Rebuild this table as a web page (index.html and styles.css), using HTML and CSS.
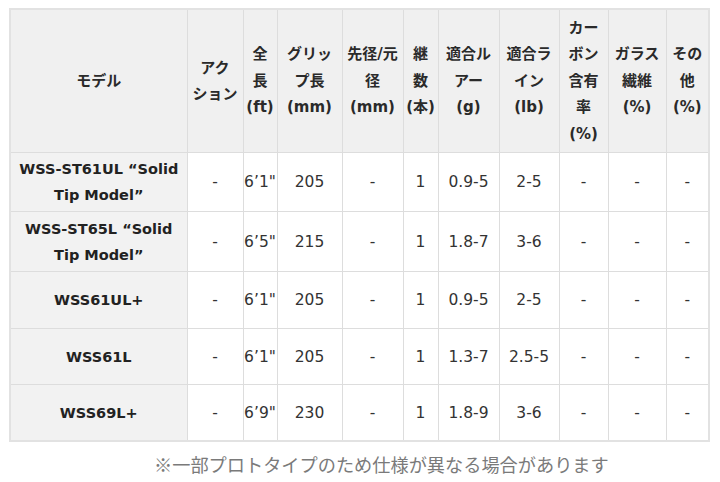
FILE: index.html
```html
<!DOCTYPE html>
<html lang="ja">
<head>
<meta charset="utf-8">
<link rel="stylesheet" href="styles.css">
</head>
<body>
<div class="page">
<table class="spec">
<colgroup>
<col class="c-model"><col class="c-act"><col class="c-len"><col class="c-grip"><col class="c-dia"><col class="c-sec"><col class="c-lure"><col class="c-line"><col class="c-carbon"><col class="c-glass"><col class="c-other">
</colgroup>
<thead>
<tr>
<th>モデル</th>
<th>アク<br>ション</th>
<th>全<br>長<br>(ft)</th>
<th>グリッ<br>プ長<br>(mm)</th>
<th>先径/元<br>径<br>(mm)</th>
<th>継<br>数<br>(本)</th>
<th>適合ル<br>アー<br>(g)</th>
<th>適合ラ<br>イン<br>(lb)</th>
<th>カー<br>ボン<br>含有<br>率<br>(%)</th>
<th>ガラス<br>繊維<br>(%)</th>
<th>その<br>他<br>(%)</th>
</tr>
</thead>
<tbody>
<tr class="r1">
<td class="model">WSS-ST61UL “Solid<br>Tip Model”</td>
<td>-</td><td>6’1"</td><td>205</td><td>-</td><td>1</td><td>0.9-5</td><td>2-5</td><td>-</td><td>-</td><td>-</td>
</tr>
<tr class="r2">
<td class="model">WSS-ST65L “Solid<br>Tip Model”</td>
<td>-</td><td>6’5"</td><td>215</td><td>-</td><td>1</td><td>1.8-7</td><td>3-6</td><td>-</td><td>-</td><td>-</td>
</tr>
<tr class="r3">
<td class="model">WSS61UL+</td>
<td>-</td><td>6’1"</td><td>205</td><td>-</td><td>1</td><td>0.9-5</td><td>2-5</td><td>-</td><td>-</td><td>-</td>
</tr>
<tr class="r4">
<td class="model">WSS61L</td>
<td>-</td><td>6’1"</td><td>205</td><td>-</td><td>1</td><td>1.3-7</td><td>2.5-5</td><td>-</td><td>-</td><td>-</td>
</tr>
<tr class="r5">
<td class="model">WSS69L+</td>
<td>-</td><td>6’9"</td><td>230</td><td>-</td><td>1</td><td>1.8-9</td><td>3-6</td><td>-</td><td>-</td><td>-</td>
</tr>
</tbody>
</table>
<p class="note">※一部プロトタイプのため仕様が異なる場合があります</p>
</div>
</body>
</html>
```
FILE: styles.css
```css
html, body {
  margin: 0;
  padding: 0;
  background: #ffffff;
}
.page {
  padding: 8px 0 0 9px;
}
.spec {
  border-collapse: collapse;
  table-layout: fixed;
  width: 699px;
  border: 2px solid #e2e2e2;
  font-family: "DejaVu Sans", "Noto Sans CJK JP", sans-serif;
  font-size: 15.5px;
  color: #333333;
}
.c-model { width: 177px; }
.c-act { width: 56px; }
.c-len { width: 34px; }
.c-grip { width: 65px; }
.c-dia { width: 61px; }
.c-sec { width: 35px; }
.c-lure { width: 61px; }
.c-line { width: 60px; }
.c-carbon { width: 49px; }
.c-glass { width: 58px; }
.c-other { width: 43px; }
.spec th, .spec td {
  border: 1px solid #dddddd;
  padding: 0;
  text-align: center;
  vertical-align: middle;
  overflow: hidden;
  white-space: nowrap;
}
.spec th {
  background: #f0f0f0;
  font-family: "DejaVu Sans", "Noto Sans CJK JP", sans-serif;
  font-weight: bold;
  font-size: 15px;
  line-height: 26.5px;
  color: #2a2a2a;
  height: 142px;
}
.spec td {
  line-height: 26px;
}
.spec td.model {
  background: #f2f2f2;
  font-weight: bold;
  font-size: 14.5px;
  color: #222222;
}
.r1 td { height: 58px; }
.r2 td { height: 59px; }
.r3 td { height: 56px; }
.r4 td { height: 55px; }
.r5 td { height: 55px; }
.note {
  margin: 10px 0 0 145px;
  font-family: "Noto Sans CJK JP", sans-serif;
  font-size: 18.2px;
  line-height: 24px;
  color: #7a7a7a;
}
```
